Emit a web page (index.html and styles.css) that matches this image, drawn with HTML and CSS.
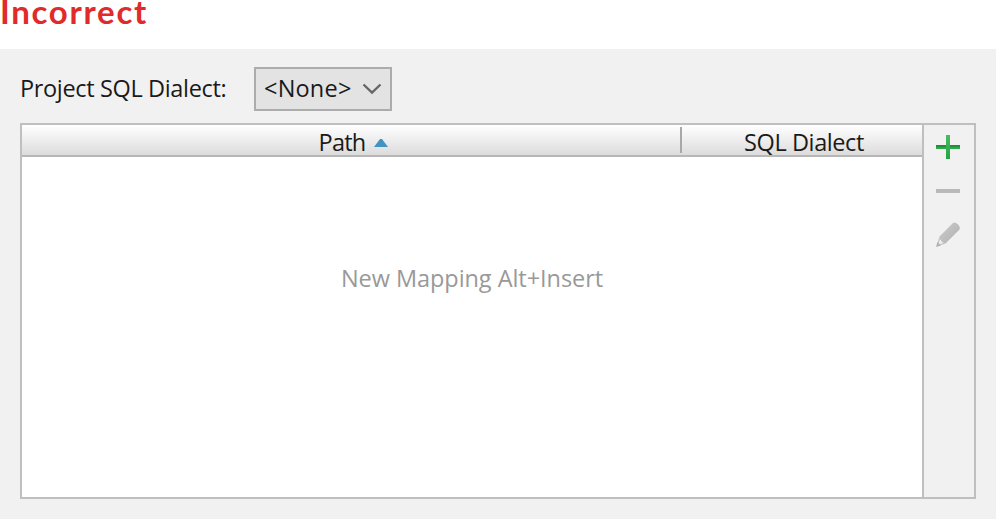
FILE: index.html
```html
<!DOCTYPE html>
<html lang="en">
<head>
<meta charset="utf-8">
<title>SQL Dialects</title>
<link rel="stylesheet" href="styles.css">
</head>
<body>
<h1 class="verdict">Incorrect</h1>
<main class="panel">
  <div class="field">
    <span class="label">Project SQL Dialect:</span>
    <button class="select" type="button">
      <span class="value">&lt;None&gt;</span>
      <svg class="chevron" width="20" height="12" viewBox="0 0 20 12"><path d="M1.5 1.5 10 9.500 18.500 1.500" fill="none" stroke="#666" stroke-width="2.400"/></svg>
    </button>
  </div>
  <section class="mappings">
    <div class="table">
      <div class="header">
        <div class="column path"><span class="path-text">Path</span><svg class="sort" width="14" height="8" viewBox="0 0 14 8"><path d="M0 8 6 0H8L14 8Z" fill="#4393c1"/></svg></div>
        <div class="column dialect"><span class="dialect-text">SQL Dialect</span></div>
      </div>
      <div class="empty"><span class="empty-text">New Mapping Alt+Insert</span></div>
    </div>
    <div class="toolbar">
      <svg width="24" height="24" viewBox="0 0 24 24">
        <defs><linearGradient id="green" x1="0" y1="0" x2="0" y2="1"><stop offset="0" stop-color="#4abb60"/><stop offset="1" stop-color="#24a442"/></linearGradient></defs>
        <path d="M0 10H24V14H0Z" fill="#209039"/><path d="M0 12H24V14H0Z" fill="#2ca749"/><path d="M10 0H14V24H10Z" fill="url(#green)"/>
      </svg>
      <svg width="24" height="4" viewBox="0 0 24 4"><path d="M0 0H24V4H0Z" fill="#b9b9b9"/></svg>
      <svg class="pencil" width="24" height="25" viewBox="0 0 24 25">
        <defs><linearGradient id="lead" x1="0" y1="0" x2="1" y2="1"><stop offset="0" stop-color="#c9c9c9"/><stop offset=".5" stop-color="#bebebe"/><stop offset="1" stop-color="#adadad"/></linearGradient></defs>
        <path d="M3 15 17 1Q19-.3 22 2.500 25 5.500 23 8L9 22Z" fill="url(#lead)"/>
        <path d="M3.500 16 8 21.500 1.500 23.500Z" fill="#ededed" stroke="#bcbcbc" stroke-width="1"/><path d="M0 25 1.400 20 5 23.500Z" fill="#b3b3b3"/>
      </svg>
    </div>
  </section>
</main>
</body>
</html>
```
FILE: styles.css
```css
* { box-sizing: border-box; }
body {
  margin: 0;
  height: 519px;
  overflow: hidden;
  background: #fff;
  color: #1a1a1a;
  font: 23.5px/32px "Open Sans", "Noto Sans", sans-serif;
}
.verdict {
  height: 49px;
  margin: 0;
  color: #e12a2a;
  font: 700 33px/22px Lato, sans-serif;
  letter-spacing: 1.7px;
}
.panel { height: 470px; padding: 18px 20px 20px; background: #f1f1f1; }
.field { display: flex; align-items: center; height: 44px; }
.label { width: 234px; padding-bottom: 2px; white-space: nowrap; letter-spacing: -0.35px; }
.select {
  display: flex;
  align-items: center;
  justify-content: space-between;
  width: 138px;
  height: 44px;
  padding: 0 8px;
  border: 2px solid #acacac;
  background: #e3e3e3;
  color: inherit;
  font: inherit;
  letter-spacing: 0.2px;
}
.value { padding-bottom: 2px; }
.mappings { display: flex; width: 956px; height: 376px; margin-top: 12px; border: 2px solid #bfbfbf; }
.table { width: 900px; background: #fff; }
.header {
  display: flex;
  height: 32px;
  border-bottom: 2px solid #b7b7b7;
  background: linear-gradient(#fff, #dcdcdc);
}
.column { display: flex; align-items: center; justify-content: center; padding-top: 4px; }
.path { width: 660px; gap: 9px; padding-left: 3px; position: relative; }
.path-text { letter-spacing: -0.8px; }
.sort { margin-top: 2px; }
.path::after { content: ""; position: absolute; right: 0; top: 2px; width: 2px; height: 26px; background: #a8a8a8; }
.dialect { flex: 1; padding-left: 4px; letter-spacing: -0.4px; }
.empty { padding-top: 105px; color: #999; text-align: center; letter-spacing: -0.05px; }
.toolbar {
  display: flex;
  flex-direction: column;
  align-items: center;
  width: 52px;
  padding: 10px 2px 0 0;
  border-left: 2px solid #bfbfbf;
  gap: 30px;
}
.pencil { margin-top: -1px; }
```
